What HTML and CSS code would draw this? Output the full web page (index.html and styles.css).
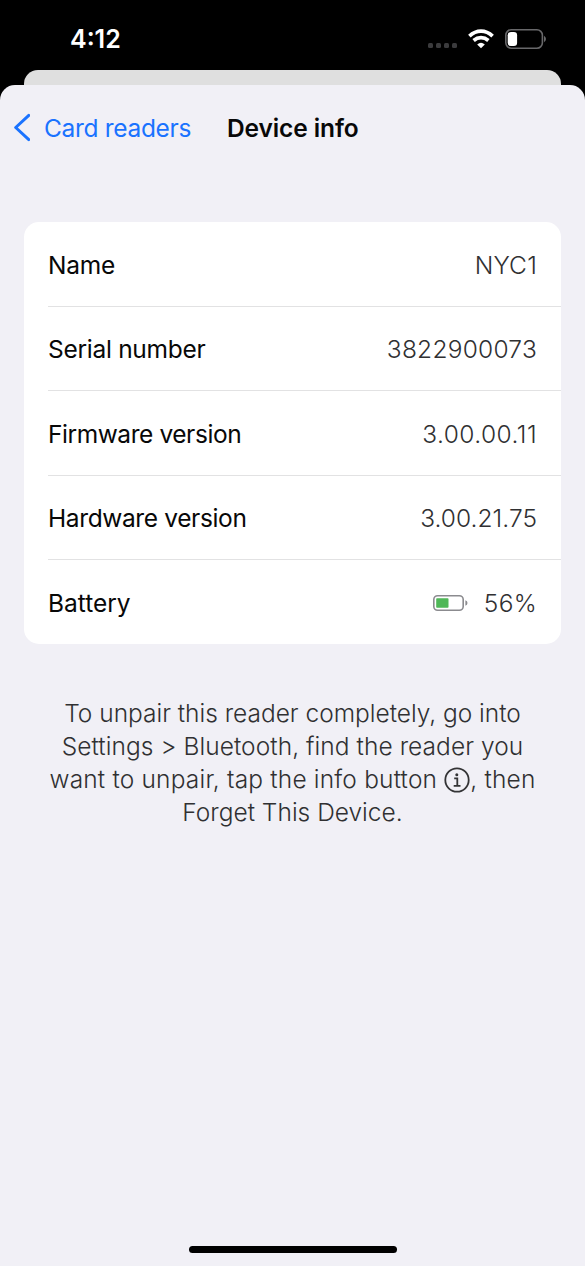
FILE: index.html
```html
<!DOCTYPE html>
<html lang="en">
<head>
<meta charset="utf-8">
<title>Device info</title>
<link rel="stylesheet" href="styles.css">
</head>
<body>
<div class="phone">
  <header class="status">
    <span class="time">4:12</span>
    <div class="indicators">
      <div class="signal"><i></i><i></i><i></i><i></i></div>
      <svg class="wifi" width="26" height="20" viewBox="0 0 26 20" fill="none" stroke="#fff" stroke-width="3.7">
        <path d="M1.4 7.2Q6.7 2.2 13 2.2T24.6 7.2"/>
        <path d="M5.6 11.5Q9 8.6 13 8.6T20.4 11.5"/>
        <path d="M13 19.2L9.2 15.4Q13 12 16.8 15.4Z" fill="#fff" stroke="none"/>
      </svg>
      <svg class="battery" width="41" height="20" viewBox="0 0 41 20">
        <rect x=".8" y=".8" width="36.6" height="18.4" rx="5.5" fill="none" stroke="#68686a" stroke-width="1.6"/>
        <rect x="2.7" y="3" width="9.4" height="14" rx="3.2" fill="#fff"/>
        <path d="M39 6.8Q41 8 41 10T39 13.2Z" fill="#68686a"/>
      </svg>
    </div>
  </header>
  <div class="backsheet"></div>
  <main class="sheet">
    <nav class="nav">
      <a class="back"><svg width="18" height="30" viewBox="0 0 18 30" fill="none" stroke="#1a73ff" stroke-width="3" stroke-linecap="round" stroke-linejoin="round"><path d="M16.8 2.4L3.7 14.5L16.8 26.6"/></svg><span class="back-label">Card readers</span></a>
      <h1 class="title">Device info</h1>
    </nav>
    <section class="card">
      <div class="row"><span class="label name">Name</span><span class="value nyc">NYC1</span></div>
      <div class="row"><span class="label serial">Serial number</span><span class="value digits">3822900073</span></div>
      <div class="row"><span class="label firmware">Firmware version</span><span class="value fw">3.00.00.11</span></div>
      <div class="row"><span class="label hardware">Hardware version</span><span class="value hw">3.00.21.75</span></div>
      <div class="row"><span class="label batt">Battery</span><span class="charge"><svg width="35" height="16" viewBox="0 0 35 16"><rect x=".8" y=".8" width="29.4" height="14.4" rx="3.8" fill="none" stroke="#8b8b8f" stroke-width="1.6"/><path d="M32.4 5.2Q34.5 6 34.5 8T32.4 10.8Z" fill="#8b8b8f"/><rect x="3.2" y="3.2" width="12.3" height="9.6" rx=".8" fill="#4fb757"/></svg><span class="value percent">56%</span></span></div>
    </section>
    <p class="help"><span class="l1">To unpair this reader completely, go into</span><br><span class="l2">Settings &gt; Bluetooth, find the reader you</span><br><span class="l3">want to unpair, tap the info button <svg class="info" width="26" height="26" viewBox="0 0 26 26" fill="none" stroke="#343436" stroke-width="1.8"><circle cx="13" cy="13" r="11.7"/><circle cx="12.8" cy="7.8" r="1.5" fill="#343436" stroke="none"/><path d="M10.2 11.3H13.3V18.8M9.7 18.9H16.5"/></svg>, then</span><br><span class="l4">Forget This Device.</span></p>
    <div class="home"></div>
  </main>
</div>
</body>
</html>
```
FILE: styles.css
```css
* { box-sizing: border-box; }
body { margin: 0; background: #000; font-family: Inter, "Liberation Sans", sans-serif; font-size: 24.5px; color: #080808; }
.phone { width: 585px; height: 1266px; display: flex; flex-direction: column; overflow: hidden; background: #000; }
.status { height: 70px; flex: none; display: flex; justify-content: space-between; padding: 0 39px 0 70px; }
.time { color: #fff; font-weight: 600; font-size: 25px; line-height: 79px; white-space: nowrap; }
.indicators { display: flex; align-items: flex-start; padding-top: 29px; }
.signal { display: flex; gap: 3px; padding-top: 14px; margin-right: 11px; }
.signal i { width: 5px; height: 5px; border-radius: 1.5px; background: #3b3b3d; }
.battery { margin-left: 11px; }
.backsheet { height: 15px; flex: none; margin: 0 24px; border-radius: 14px 14px 0 0; background: #dfdfdf; }
.sheet { flex: 1; display: flex; flex-direction: column; background: #f1f0f6; border-radius: 15px 15px 0 0; padding: 0 24px; }
.nav { height: 84px; padding-top: 1px; display: flex; align-items: center; margin: 0 -12px; }
.back { display: flex; align-items: center; gap: 14px; width: 215px; color: #1a73ff; }
.back-label, .title, .label, .value { white-space: nowrap; }
.back-label { letter-spacing: -.32px; }
.title { margin: 0; font-size: 24.5px; font-weight: 600; letter-spacing: -.1px; }
.card { margin-top: 53px; background: #fff; border-radius: 15px; padding-left: 24px; }
.row { height: 84.4px; padding-top: 1px; display: flex; align-items: center; justify-content: space-between; padding-right: 24px; border-bottom: 1px solid #e2e2e3; }
.row:first-child { height: 85px; }
.row:last-child { border-bottom: 0; height: 83.8px; }
.name { letter-spacing: -.25px; }
.serial { letter-spacing: -.28px; }
.firmware { letter-spacing: -.43px; }
.hardware { letter-spacing: -.37px; }
.batt { letter-spacing: 0; }
.value { color: #303032; font-weight: 300; }
.nyc { letter-spacing: .2px; }
.digits { letter-spacing: .25px; }
.fw { letter-spacing: .45px; }
.hw { letter-spacing: .04px; }
.percent { letter-spacing: .3px; }
.charge { display: flex; align-items: center; gap: 16px; }
.help { margin: 53px -10px 0; text-align: center; color: #303032; line-height: 33px; white-space: nowrap; font-weight: 300; }
.l1 { letter-spacing: -.02px; }
.l2 { letter-spacing: .06px; }
.l3 { letter-spacing: .18px; }
.info { vertical-align: -5px; }
.home { width: 208px; height: 7px; border-radius: 4px; background: #000; margin: auto auto 13px; }
```
